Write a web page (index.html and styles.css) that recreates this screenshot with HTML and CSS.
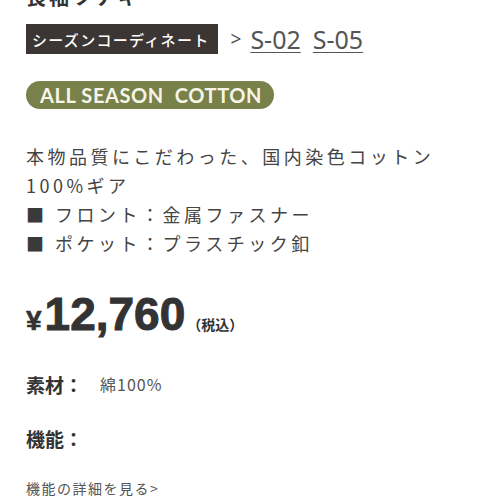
FILE: index.html
```html
<!DOCTYPE html>
<html lang="ja">
<head>
<meta charset="utf-8">
<link rel="stylesheet" href="styles.css">
</head>
<body>
<div class="page">
  <h1 class="title">長袖ツナギ</h1>
  <div class="coord">
    <span class="tag">シーズンコーディネート</span>
    <span class="arrow">&gt;</span>
    <a class="code">S-02</a>
    <a class="code">S-05</a>
  </div>
  <div class="pill">ALL SEASON&nbsp; COTTON</div>
  <div class="desc">
    <p>本物品質にこだわった、国内染色コットン</p>
    <p>100%ギア</p>
    <p><span class="sq">■</span> フロント：金属ファスナー</p>
    <p><span class="sq">■</span> ポケット：プラスチック釦</p>
  </div>
  <div class="price">
    <span class="yen">¥</span><span class="amount">12,760</span><span class="tax">（税込）</span>
  </div>
  <div class="spec">
    <span class="label">素材：</span><span class="value">綿100%</span>
  </div>
  <div class="spec spec-func">
    <span class="label">機能：</span>
  </div>
  <a class="more">機能の詳細を見る&gt;</a>
</div>
</body>
</html>
```
FILE: styles.css
```css
html, body {
  margin: 0;
  padding: 0;
  background: #ffffff;
}
.page {
  padding-left: 26px;
  font-family: "Noto Sans CJK JP", "Noto Sans", sans-serif;
  color: #3a3a3a;
  overflow: hidden;
  height: 500px;
}
.title {
  margin: -13px 0 0 0;
  font-size: 20px;
  line-height: 20px;
  font-weight: 700;
  letter-spacing: 3px;
  color: #333;
}
.coord {
  display: flex;
  align-items: center;
  margin-top: 17px;
  height: 30px;
}
.tag {
  display: inline-flex;
  align-items: center;
  height: 30px;
  padding: 0 8px 0 6px;
  background: #3b3634;
  color: #fff;
  font-size: 15px;
  letter-spacing: 1.3px;
  font-weight: 500;
}
.arrow {
  margin-left: 13px;
  font-family: "Noto Sans", sans-serif;
  font-size: 19px;
  color: #555;
}
.code {
  margin-left: 9px;
  font-family: "Noto Sans", sans-serif;
  font-size: 25px;
  line-height: 29px;
  color: #555;
  text-decoration: underline;
  text-underline-offset: 3px;
  text-decoration-thickness: 1px;
}
.code + .code {
  margin-left: 12px;
}
.pill {
  display: inline-flex;
  align-items: center;
  margin-top: 27px;
  height: 28px;
  padding: 0 12px 0 14px;
  border-radius: 14px;
  background: #78814a;
  color: #f6f5e8;
  font-family: "Lato", "Open Sans", sans-serif;
  font-weight: 700;
  font-size: 20px;
  letter-spacing: 0.6px;
}
.desc {
  margin-top: 33px;
  font-size: 18px;
  line-height: 29px;
  letter-spacing: 3.5px;
  color: #444;
}
.desc p {
  margin: 0;
}
.sq {
  color: #3a3a3a;
}
.price {
  display: flex;
  align-items: baseline;
  margin-top: 33px;
  font-family: "Liberation Sans", Arial, sans-serif;
  font-weight: 700;
  color: #333;
}
.yen {
  font-size: 28px;
  margin-right: 3px;
  -webkit-text-stroke: 0.6px #333;
}
.amount {
  font-size: 46px;
  line-height: 46px;
  -webkit-text-stroke: 1px #333;
}
.tax {
  font-family: "Noto Sans CJK JP", sans-serif;
  font-size: 14px;
  margin-left: 2px;
}
.spec {
  display: flex;
  align-items: center;
  margin-top: 36px;
  height: 22px;
}
.spec-func {
  margin-top: 32px;
}
.label {
  font-size: 19px;
  font-weight: 700;
  color: #333;
  width: 74px;
}
.value {
  font-size: 16px;
  letter-spacing: 1px;
  color: #555;
}
.more {
  display: block;
  margin-top: 30px;
  font-size: 14px;
  line-height: 18px;
  letter-spacing: 1.5px;
  color: #555;
}
```
